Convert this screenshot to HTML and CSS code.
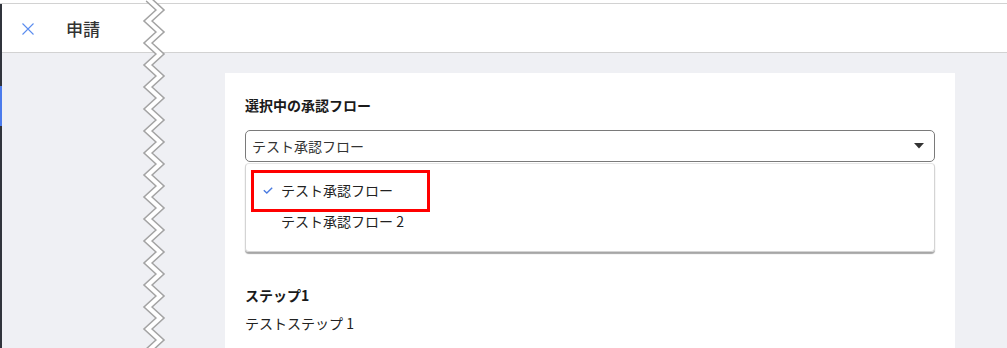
FILE: index.html
```html
<!DOCTYPE html>
<html lang="ja">
<head>
<meta charset="utf-8">
<title>申請</title>
<link rel="stylesheet" href="styles.css">
</head>
<body>
<div class="page">
  <div class="topline"></div>
  <div class="app">
    <div class="rail"><div class="rail-active"></div></div>
    <div class="main">
      <header class="header">
        <svg class="close" width="12" height="12" viewBox="0 0 12 12"><path d="M0.5 0.5 L11.5 11.5 M11.5 0.5 L0.5 11.5" stroke="#5b8def" stroke-width="1.1" fill="none"/></svg>
        <h1 class="title">申請</h1>
      </header>
      <div class="content">
        <section class="card">
          <div class="label">選択中の承認フロー</div>
          <div class="select">
            <span class="select-value">テスト承認フロー</span>
            <svg class="caret" width="10" height="6" viewBox="0 0 10 6"><path d="M0 0 H10 L5 5.5 Z" fill="#333"/></svg>
          </div>
          <ul class="menu">
            <li class="option selected">
              <svg class="check" width="10" height="7" viewBox="0 0 10 7"><path d="M0.8 3.2 L3.8 6 L9.2 0.8" stroke="#4a7be0" stroke-width="1.4" fill="none"/></svg>
              <span>テスト承認フロー</span>
            </li>
            <li class="option"><span>テスト承認フロー 2</span></li>
            <li class="highlight-box"></li>
          </ul>
          <div class="step-title">ステップ1</div>
          <div class="step-name">テストステップ 1</div>
        </section>
      </div>
    </div>
  </div>
  <svg class="zigzag" width="30" height="348" viewBox="0 0 30 348">
    <polyline points="7,-1 19,10 7,21 19,32 7,43 19,54 7,65 19,76 7,87 19,98 7,109 19,120 7,131 19,142 7,153 19,164 7,175 19,186 7,197 19,208 7,219 19,230 7,241 19,252 7,263 19,274 7,285 19,296 7,307 19,318 7,329 19,340 7,351" fill="none" stroke="#a3a3a3" stroke-width="7" stroke-linejoin="miter" stroke-miterlimit="10"/>
    <polyline points="7,-1 19,10 7,21 19,32 7,43 19,54 7,65 19,76 7,87 19,98 7,109 19,120 7,131 19,142 7,153 19,164 7,175 19,186 7,197 19,208 7,219 19,230 7,241 19,252 7,263 19,274 7,285 19,296 7,307 19,318 7,329 19,340 7,351" fill="none" stroke="#ffffff" stroke-width="4" stroke-linejoin="miter" stroke-miterlimit="10"/>
  </svg>
</div>
</body>
</html>
```

FILE: styles.css
```css
* { box-sizing: border-box; }
html, body { margin: 0; padding: 0; }
body {
  font-family: "Noto Sans CJK JP", "Noto Sans", sans-serif;
  color: #222;
  background: #eff0f4;
}
.page {
  position: relative;
  width: 1007px;
  height: 348px;
  overflow: hidden;
  display: flex;
  flex-direction: column;
}
.topline {
  height: 4px;
  background: #fff;
  border-bottom: 1px solid #d2d2d2;
  flex: none;
}
.app {
  flex: 1;
  display: flex;
  min-height: 0;
}
.rail {
  width: 2px;
  background: #30343c;
  flex: none;
  display: flex;
  flex-direction: column;
}
.rail-active {
  margin-top: 82px;
  height: 40px;
  background: #4b7bec;
}
.main {
  flex: 1;
  display: flex;
  flex-direction: column;
  min-width: 0;
}
.header {
  height: 49px;
  background: #fff;
  border-bottom: 1px solid #d2d2d2;
  display: flex;
  align-items: center;
  padding-left: 20px;
  flex: none;
}
.close { display: block; margin-top: 1px; }
.title {
  margin: 0 0 0 32px;
  font-size: 17px;
  font-weight: 500;
  color: #333;
  line-height: 24px;
  margin-top: 2px;
}
.content {
  flex: 1;
  padding: 20px 0 0 223px;
  min-height: 0;
}
.card {
  width: 730px;
  height: 300px;
  background: #fff;
  padding: 22px 20px 0;
}
.label {
  font-size: 14px;
  font-weight: 700;
  line-height: 20px;
  color: #1a1a1a;
}
.select {
  margin-top: 15px;
  height: 32px;
  border: 1px solid #7a7a7a;
  border-radius: 5px;
  display: flex;
  align-items: center;
  justify-content: space-between;
  padding: 0 10px 0 6px;
}
.select-value {
  font-size: 14px;
  line-height: 20px;
  color: #333;
}
.caret { display: block; }
.menu {
  position: relative;
  list-style: none;
  margin: 1px 0 0;
  padding: 10px 0 14px;
  border: 1px solid #d4d4d4;
  border-top-color: #e6e6e6;
  border-radius: 4px;
  box-shadow: 0 2px 1px rgba(0,0,0,0.35);
  height: 89px;
}
.option {
  height: 31px;
  display: flex;
  align-items: center;
  padding-left: 35px;
  font-size: 14px;
  line-height: 20px;
  color: #222;
  position: relative;
}
.check {
  position: absolute;
  left: 17px;
  top: 13px;
}
.highlight-box {
  position: absolute;
  left: 5px;
  top: 6px;
  width: 179px;
  height: 42px;
  border: 3px solid #ff0000;
}
.step-title {
  margin-top: 33px;
  font-size: 14px;
  font-weight: 700;
  line-height: 20px;
  color: #1a1a1a;
}
.step-name {
  margin-top: 8px;
  font-size: 14px;
  line-height: 20px;
  color: #222;
}
.zigzag {
  position: absolute;
  left: 141px;
  top: 0;
}
```
